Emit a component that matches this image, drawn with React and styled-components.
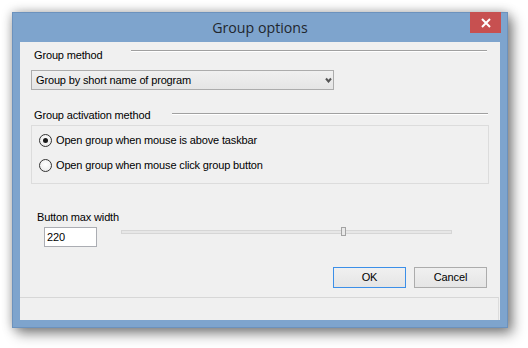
import React from "react";
import styled, { createGlobalStyle } from "styled-components";

const Global = createGlobalStyle`
  html, body { margin: 0; padding: 0; background: #ffffff; }
  body { font-family: "Liberation Sans", Arial, sans-serif; }
  * { box-sizing: border-box; }
`;

const Page = styled.div`
  padding: 12px 0 0 12px;
  width: 528px;
  height: 348px;
`;

const Window = styled.div`
  width: 496px;
  height: 316px;
  background: #7ea4cd;
  border: 1px solid #6c92bd;
  box-shadow: 0 0 10px rgba(0, 0, 0, 0.28), 5px 6px 12px rgba(0, 0, 0, 0.42);
  display: flex;
  flex-direction: column;
`;

const TitleBar = styled.div`
  height: 29px;
  display: grid;
  grid-template-columns: 1fr auto 1fr;
  align-items: start;
`;

const Title = styled.div`
  grid-column: 2;
  font-family: "Open Sans", "Noto Sans", sans-serif;
  font-size: 14.2px;
  line-height: 30px;
  color: #22272e;
`;

const CloseButton = styled.div`
  grid-column: 3;
  justify-self: end;
  width: 31px;
  height: 21px;
  margin-top: -1px;
  margin-right: 6px;
  background: #c75050;
  display: flex;
  align-items: center;
  justify-content: center;
`;

const Client = styled.div`
  flex: 1;
  margin: 0 7px 7px 7px;
  background: #f0f0f0;
  display: flex;
  flex-direction: column;
  font-family: "Liberation Sans", Arial, sans-serif;
  font-size: 11px;
  letter-spacing: -0.15px;
  color: #000;
`;

const Content = styled.div`
  flex: 1;
  padding: 6px 11px 0 11px;
  display: flex;
  flex-direction: column;
`;

const SectionHeader = styled.div`
  display: grid;
  grid-template-columns: ${(p) => p.$labelWidth}px 1fr;
  align-items: start;
  height: 14px;
  margin-top: ${(p) => p.$top || 0}px;
`;

const SectionLabel = styled.div`
  padding-left: 3px;
  line-height: 14px;
  white-space: nowrap;
`;

const Rule = styled.div`
  margin-top: ${(p) => p.$offset}px;
  margin-right: ${(p) => p.$right}px;
  border-top: 1px solid #a0a0a0;
  border-bottom: 1px solid #ffffff;
`;

const Select = styled.div`
  margin-top: 8px;
  width: 303px;
  height: 20px;
  border: 1px solid #acacac;
  background: linear-gradient(#f0f0f0, #e5e5e5);
  display: flex;
  align-items: center;
  justify-content: space-between;
  padding: 0 1px 0 4px;
  line-height: 18px;
`;

const GroupBox = styled.div`
  margin-top: 3px;
  height: 59px;
  border: 1px solid #dcdcdc;
  padding: 6px 0 0 7px;
  display: flex;
  flex-direction: column;
  gap: 9px;
`;

const RadioRow = styled.label`
  display: flex;
  align-items: center;
  gap: 4px;
  height: 16px;
  line-height: 16px;
  white-space: nowrap;
`;

const RadioCircle = styled.span`
  width: 13px;
  height: 13px;
  border-radius: 50%;
  border: 1px solid #333;
  background: radial-gradient(circle at 50% 40%, #ffffff, #e6e6e6);
  display: flex;
  align-items: center;
  justify-content: center;
  &::after {
    content: "";
    width: 5px;
    height: 5px;
    border-radius: 50%;
    background: ${(p) => (p.$checked ? "#1a1a1a" : "transparent")};
  }
`;

const FieldLabel = styled.div`
  margin-top: 26px;
  padding-left: 6px;
  line-height: 14px;
  height: 14px;
`;

const FieldRow = styled.div`
  margin-top: 3px;
  display: flex;
  align-items: flex-start;
  height: 20px;
`;

const NumberBox = styled.div`
  margin-left: 13px;
  width: 53px;
  height: 20px;
  border: 1px solid #abadb3;
  background: #fff;
  padding-left: 2px;
  line-height: 18px;
`;

const Track = styled.div`
  position: relative;
  margin-left: 24px;
  margin-top: 3px;
  width: 331px;
  height: 4px;
  border: 1px solid #d6d6d6;
  background: #e7e7e7;
`;

const Thumb = styled.div`
  position: absolute;
  top: -4px;
  width: 5px;
  height: 9px;
  border: 1px solid #a3a3a3;
  background: #e9e9e9;
`;

const ButtonRow = styled.div`
  margin-top: 20px;
  display: flex;
  justify-content: flex-end;
  gap: 8px;
  padding-right: 2px;
`;

const Button = styled.div`
  width: 73px;
  height: 21px;
  border: 1px solid ${(p) => (p.$default ? "#3c8fe8" : "#acacac")};
  background: linear-gradient(#f0f0f0, #e5e5e5);
  display: flex;
  align-items: center;
  justify-content: center;
  line-height: 19px;
`;

const StatusBar = styled.div`
  height: 23px;
  border-top: 1px solid #d7d7d7;
  border-right: 1px solid #dcdcdc;
  margin-right: 1px;
`;

export default function App() {
  const max = 331;
  const value = 220;
  const trackInner = 329;
  return (
    <Page>
      <Global />
      <Window>
        <TitleBar>
          <Title>Group options</Title>
          <CloseButton>
            <svg width="10" height="10" viewBox="0 0 10 10">
              <path d="M1 1 L9 9 M9 1 L1 9" stroke="#fff" strokeWidth="2" />
            </svg>
          </CloseButton>
        </TitleBar>
        <Client>
          <Content>
            <SectionHeader $labelWidth={100}>
              <SectionLabel>Group method</SectionLabel>
              <Rule $offset={2} $right={2} />
            </SectionHeader>
            <Select>
              <span>Group by short name of program</span>
              <svg width="7" height="6" viewBox="0 0 7 6">
                <path d="M1 1.5 L3.5 4.5 L6 1.5" stroke="#555" strokeWidth="2" fill="none" />
              </svg>
            </Select>
            <SectionHeader $labelWidth={141} $top={18}>
              <SectionLabel>Group activation method</SectionLabel>
              <Rule $offset={5} $right={1} />
            </SectionHeader>
            <GroupBox>
              <RadioRow>
                <RadioCircle $checked />
                Open group when mouse is above taskbar
              </RadioRow>
              <RadioRow>
                <RadioCircle />
                Open group when mouse click group button
              </RadioRow>
            </GroupBox>
            <FieldLabel>Button max width</FieldLabel>
            <FieldRow>
              <NumberBox>220</NumberBox>
              <Track>
                <Thumb style={{ left: `${Math.round((value / max) * trackInner)}px` }} />
              </Track>
            </FieldRow>
            <ButtonRow>
              <Button $default>OK</Button>
              <Button>Cancel</Button>
            </ButtonRow>
          </Content>
          <StatusBar />
        </Client>
      </Window>
    </Page>
  );
}
